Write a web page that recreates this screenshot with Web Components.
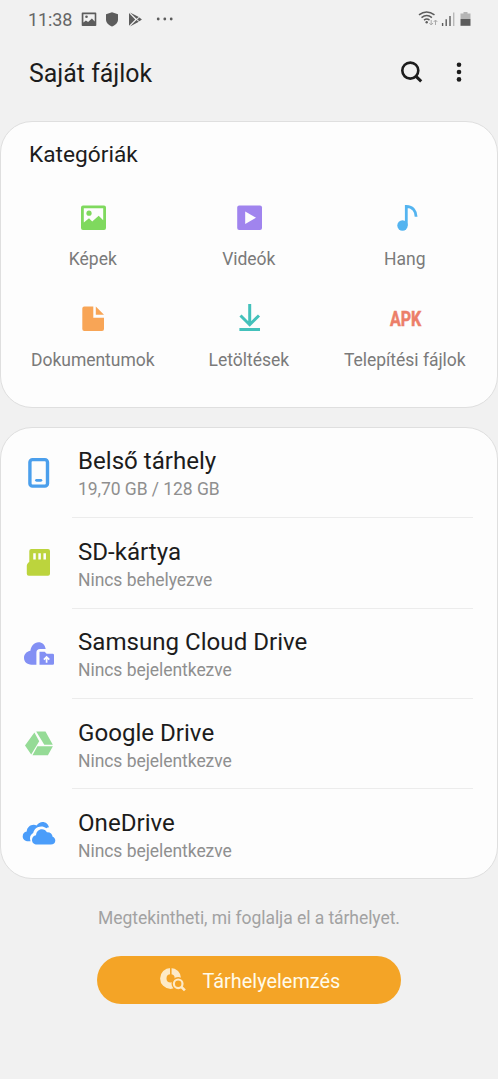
<!DOCTYPE html>
<html lang="hu">
<head>
<meta charset="utf-8">
<title>Saját fájlok</title>
<style>
html,body{margin:0;background:#f1f1f1;font-family:Roboto,"Noto Sans",sans-serif;color:#1c1c1c}
</style>
</head>
<body>
<files-app></files-app>
<script>
const ICONS = {
  images: '<path fill="#7fd95e" fill-rule="evenodd" d="M8 5.5h21a2 2 0 0 1 2 2V28a2 2 0 0 1-2 2H8a2 2 0 0 1-2-2V7.500a2 2 0 0 1 2-2ZM8.800 8.300V22.500L14 18.300 17.200 21.500 23.700 15.700 28.200 20.200V8.300Z"/><circle cx="14" cy="13.200" r="2.600" fill="#7fd95e"/>',
  video: '<rect x="6.200" y="5.500" width="24.800" height="24.600" rx="2" fill="#a084ee"/><path d="M14.200 11.500 25 17.700 14.200 24Z" fill="#fdfdfd"/>',
  music: '<circle cx="15.500" cy="25.500" r="5.200" fill="#54b4f0"/><path d="M19.300 25.500V6.400C26 6.400 29.100 11.400 29.100 16.700" fill="none" stroke="#54b4f0" stroke-width="2.800"/>',
  doc: '<path fill="#f8a556" d="M9.300 5.500h9V16.700H29V28a2 2 0 0 1-2 2H9.300a2 2 0 0 1-2-2V7.500a2 2 0 0 1 2-2ZM20.800 5.500 29 13.700H20.800Z"/>',
  download: '<path fill="none" stroke="#43c1bb" stroke-width="3" d="M18.700 3v20.500M9.500 14.500l9.200 9.200 9.300-9.200M8.400 28.600h20.600"/>',
  phone: '<rect x="9.900" y="4.600" width="17.600" height="26.500" rx="2.600" fill="none" stroke="#4b9fec" stroke-width="3.400"/><path d="M16.500 25.300h4.400" stroke="#4b9fec" stroke-width="2.800" stroke-linecap="round"/>',
  sd: '<path fill="#bcd43d" d="M11.300 4H28a2 2 0 0 1 2 2v22.700a2 2 0 0 1-2 2H8.800a2 2 0 0 1-2-2V20.500a4 4 0 0 1 1.200-2.500l1.300-1.300V6a2 2 0 0 1 2-2Z"/><path stroke="#fdfdfd" stroke-width="2.500" d="M14.500 8.200v6.300M19.600 8.200v6.300M24.700 8.200v6.300"/>',
  cloud: '<path fill="#8390f4" d="M11.500 28.700C7 28.700 4 25.700 4 21.800c0-3.600 2.600-6.300 6.400-7C11 9.800 14.200 6.200 18.500 6.200c3.700 0 6.600 2.700 7.200 6.900H20c-2.200 0-3.600 1.400-3.600 3.600v12Z"/><path fill="#8390f4" d="M19.500 15.800h5.200l1.900 2h6.200a1.200 1.200 0 0 1 1.200 1.200v8.600a1.200 1.200 0 0 1-1.200 1.200H19.500Z"/><path fill="none" stroke="#fdfdfd" stroke-width="1.700" d="M26.600 26.700v-5.600M23.900 23.600l2.700-2.700 2.700 2.700"/>',
  gdrive: '<path fill="#95db96" d="M14.400 6.600 19.200 15.200 11.200 28.600 5 19.500ZM16.200 5.600h9.300l7.300 13.200h-8.500ZM17.400 20.200h15.500l-5 9H12.500Z"/>',
  onedrive: '<path fill="#4b9dfa" d="M10.600 25.200H8.200c-3 0-5.500-2-5.500-4.800 0-2.500 1.700-4.400 4-4.800.2-3.900 3.300-6.800 7-6.800 1.100 0 2 .2 2.900.6C18.200 7.300 20.300 6 22.600 6c3.200 0 5.700 2.200 6.400 5.300-1 .1-1.900.4-2.700.9-1.500-1.100-3.200-1.700-5.100-1.700-4 0-7.200 2.800-8 6.500-2 1.100-3.200 2.900-3.200 5.200 0 1.100.2 2.100.6 3Z"/><path fill="#4b9dfa" d="M17 28.600c-2.900 0-5-1.900-5-4.600 0-2.600 1.600-4.400 4-4.800.3-3.400 2.700-5.900 5.900-5.900 2.200 0 4 1.100 5 2.900 3.200-.3 5.500 1.600 5.700 4.600 1.700.6 2.700 1.900 2.700 3.700 0 2.400-1.800 4.100-4.500 4.100Z"/>'
};

function define(name, css, html) {
  const t = document.createElement('template');
  t.innerHTML = `<style>${css}</style>`;
  customElements.define(name, class extends HTMLElement {
    constructor() {
      super();
      const root = this.attachShadow({mode: 'open'});
      root.append(t.content.cloneNode(true));
      root.innerHTML += typeof html === 'function' ? html(this) : html;
    }
  });
}

define('file-icon', ':host{display:block;width:36px;height:36px}svg{display:block}',
  el => `<svg width="36" height="36" viewBox="0 0 36 36">${ICONS[el.getAttribute('name')]}</svg>`);

define('status-bar', `
  :host{display:flex;align-items:flex-start;height:40px;color:#666;box-sizing:border-box;padding:0 24px 0 28px}
  span{font-size:18px;line-height:40px;width:52px;letter-spacing:-.1px}
  svg{display:block}
  .r{margin-left:auto}`, `
  <span>11:38</span>
  <svg width="100" height="40" viewBox="80 0 100 40" fill="#5c5c5c">
    <path fill-rule="evenodd" d="M82.500 12.500h13a.8.800 0 0 1 .8.800v12a.8.800 0 0 1-.8.800h-13a.8.800 0 0 1-.8-.8v-12a.8.800 0 0 1 .8-.8ZM83.400 14.200v8.300l2.500-2 2.200 1.600 3.800-3.500 2.800 3v-7.400Z"/><circle cx="86.500" cy="16.800" r="1.300"/>
    <path d="M112 12.300l6 2v5.200c0 3.300-2.500 5.500-6 7-3.500-1.500-6-3.700-6-7v-5.200Z"/>
    <path d="M129 13v12.800l6.200-6.400ZM130 12.400l8.800 4.700-2.300 1.700ZM137.200 19.400l2.200-1.900 2.500 1.900-2.500 1.900ZM130 26.400l6.500-6.400 2.300 1.700Z"/>
    <circle cx="158.200" cy="19" r="1.400"/><circle cx="164.800" cy="19" r="1.400"/><circle cx="171.200" cy="19" r="1.400"/>
  </svg>
  <svg class="r" width="58" height="40" viewBox="416 0 58 40">
    <g fill="none" stroke="#5c5c5c" stroke-width="1.500"><path d="M419 14.800q7.500-5.800 15.500 0M421.500 17.600q5.300-4 10.400 0M424 20.100q2.800-2 5.500 0"/></g>
    <circle cx="426.700" cy="22.300" r="1.200" fill="#5c5c5c"/>
    <path fill="none" stroke="#aaa" stroke-width="1" d="M431.200 20v4.800M429.400 23l1.800 2 1.800-2M435.500 25v-4.800M433.700 22l1.800-2 1.800 2"/>
    <path stroke="#5c5c5c" stroke-width="1.400" d="M442.600 23v2.900M446.200 19.300v6.600M450 16v9.900"/><path stroke="#b9b9b9" stroke-width="1.400" d="M453.700 12.500v13.400"/>
    <path fill="#b5b5b5" d="M463.500 12h4v1.600h3V19h-10v-5.400h3Z"/><path fill="#5c5c5c" d="M460.500 19h10v6.800h-10Z"/>
  </svg>`);

define('app-header', `
  :host{display:flex;height:81px;padding:0 29px;box-sizing:border-box;align-items:flex-start}
  h1{margin:17px 0 0;font-weight:400;font-size:24.900px;line-height:34px;white-space:nowrap}
  svg{display:block;margin-left:auto}`, `
  <h1><slot></slot></h1>
  <svg width="74" height="64" viewBox="395 40 74 64"><circle cx="410.300" cy="70.600" r="8" fill="none" stroke="#1c1c1c" stroke-width="2.600"/><path d="M416 76.300l5.200 5" stroke="#1c1c1c" stroke-width="3"/><g fill="#1c1c1c"><circle cx="459" cy="64.700" r="2.300"/><circle cx="459" cy="72" r="2.300"/><circle cx="459" cy="79.400" r="2.300"/></g></svg>`);

define('round-card', ':host{display:block;box-sizing:border-box;border:1px solid #dfdfdf;border-radius:32px;background:#fdfdfd;overflow:hidden}', '<slot></slot>');

define('category-grid', `
  :host{display:block;padding-bottom:18px}
  h2{margin:18px 0 0 28px;font-weight:400;font-size:22.700px;line-height:30px}
  div{display:grid;grid-template-columns:repeat(3,156px);grid-auto-rows:101.400px;margin:30px 0 0 13.800px}`,
  '<h2>Kategóriák</h2><div><slot></slot></div>');

define('category-tile', `
  :host{display:flex;flex-direction:column;align-items:center;color:#7a7a7a;font-size:17.500px;letter-spacing:-.02px;line-height:24px;white-space:nowrap}
  .i{display:flex;width:36px;height:36px;margin:0 .5px 11px 0;align-items:center;justify-content:center}
  b{color:#ec7f69;font-size:19.500px;transform:translate(.5px,1px) scaleX(.82);-webkit-text-stroke:.5px #ec7f69}`,
  el => `<span class="i">${el.getAttribute('icon') === 'apk' ? '<b>APK</b>' : `<file-icon name="${el.getAttribute('icon')}"></file-icon>`}</span><slot></slot>`);

define('storage-row', `
  :host{display:grid;grid-template-columns:58px 1fr;height:90.350px;box-sizing:border-box;padding-left:19px}
  file-icon{margin-top:27px}
  .t{margin-right:24px;margin-left:-6px;padding:18.470px 0 0 6px;border-bottom:1px solid #ececec;white-space:nowrap}
  :host([last]) .t{border:0}
  .n{font-size:24.100px;line-height:30px}
  .s{font-size:17.500px;letter-spacing:-.05px;line-height:24px;margin-top:1px;color:#8f8f8f}`,
  el => `<file-icon name="${el.getAttribute('icon')}"></file-icon><div class="t"><div class="n"><slot></slot></div><div class="s">${el.getAttribute('detail')}</div></div>`);

define('storage-footer', `
  :host{display:flex;flex-direction:column;align-items:center}
  p{margin:27px 0 0;font-size:17.500px;letter-spacing:-.06px;line-height:24px;color:#a2a2a2}
  button{display:flex;align-items:center;margin:26.400px 0 0;width:304px;height:48px;border:0;border-radius:24px;padding:0 0 0 61px;background:#f4a426;color:#fffbe9;font:400 19.900px Roboto,sans-serif;white-space:nowrap}
  span{padding-top:2px}
  svg{display:block;margin-right:14.500px}`, `
  <p>Megtekintheti, mi foglalja el a tárhelyet.</p>
  <button><svg width="30" height="30" viewBox="0 0 30 30" fill="none" stroke="#fdeac7">
    <circle cx="12.600" cy="13.400" r="7.300" stroke-width="6.400"/>
    <path stroke="#f4a426" stroke-width="1.600" d="M12.800 2v9"/>
    <circle cx="20.200" cy="18.800" r="6.700" fill="#f4a426" stroke="none"/>
    <circle cx="20.200" cy="18.800" r="4.300" stroke-width="2.200"/><path stroke-width="2.600" d="M23.200 21.800l3.700 3.600"/></svg><span>Tárhelyelemzés</span></button>`);

define('files-app', `
  :host{display:flex;flex-direction:column;width:498px;height:1079px;overflow:hidden}
  .c{height:287px;margin-bottom:19px}
  .s{height:452px}`, `
  <status-bar></status-bar>
  <app-header>Saját fájlok</app-header>
  <round-card class="c"><category-grid>
    <category-tile icon="images">Képek</category-tile>
    <category-tile icon="video">Videók</category-tile>
    <category-tile icon="music">Hang</category-tile>
    <category-tile icon="doc">Dokumentumok</category-tile>
    <category-tile icon="download">Letöltések</category-tile>
    <category-tile icon="apk">Telepítési fájlok</category-tile>
  </category-grid></round-card>
  <round-card class="s">
    <storage-row icon="phone" detail="19,70 GB / 128 GB">Belső tárhely</storage-row>
    <storage-row icon="sd" detail="Nincs behelyezve">SD-kártya</storage-row>
    <storage-row icon="cloud" detail="Nincs bejelentkezve">Samsung Cloud Drive</storage-row>
    <storage-row icon="gdrive" detail="Nincs bejelentkezve">Google Drive</storage-row>
    <storage-row icon="onedrive" detail="Nincs bejelentkezve" last>OneDrive</storage-row>
  </round-card>
  <storage-footer></storage-footer>`);
</script>
</body>
</html>
